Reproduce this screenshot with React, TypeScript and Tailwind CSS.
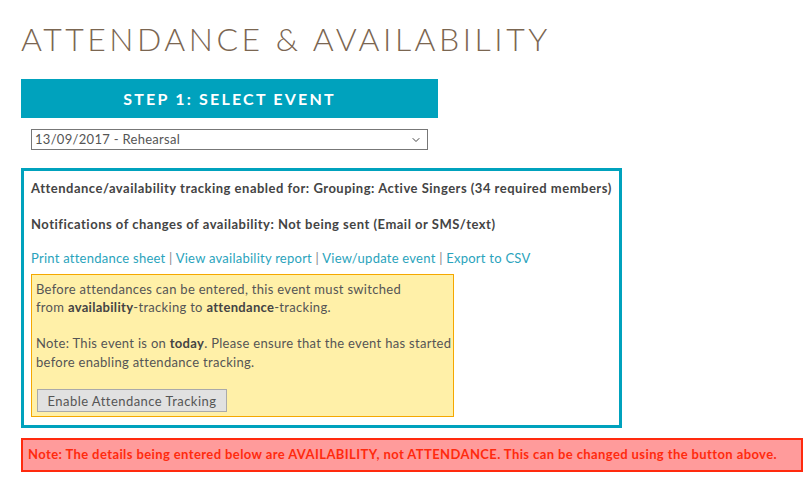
import { ChevronDown } from "lucide-react";

const font = { fontFamily: "Lato, 'Open Sans', sans-serif" };

export default function App() {
  return (
    <div
      className="w-[803px] h-[489px] overflow-hidden bg-white text-[13px] text-[#555] tracking-[0.3px]"
      style={font}
    >
      <h1 className="pl-[21px] pt-[22px] text-[32px] leading-[34px] font-light tracking-[3.5px] text-[#7b6651]">
        ATTENDANCE &amp; AVAILABILITY
      </h1>

      <div className="ml-[21px] mt-[23px] w-[417px] h-[39px] bg-[#00a2bd] flex items-center justify-center">
        <span className="text-white font-bold text-[16px] tracking-[2.2px]">
          STEP 1: SELECT EVENT
        </span>
      </div>

      <div className="relative ml-[31px] mt-[11px] w-[397px]">
        <select className="appearance-none w-full h-[21px] border border-[#777] bg-white pl-[3px] text-[13px] text-[#555] leading-[19px] tracking-[0.3px] outline-none">
          <option>13/09/2017 - Rehearsal</option>
        </select>
        <ChevronDown
          className="absolute right-[6px] top-[5px] w-[12px] h-[12px] text-[#444] pointer-events-none"
          strokeWidth={2}
        />
      </div>

      <div className="ml-[21px] mt-[18px] w-[601px] h-[260px] border-[3px] border-[#00a2bd] px-[7px] pt-[8px]">
        <p className="font-bold text-[#444] leading-[18px] tracking-[0.5px]">
          Attendance/availability tracking enabled for: Grouping: Active Singers (34 required members)
        </p>
        <p className="mt-[18px] font-bold text-[#444] leading-[18px] tracking-[0.5px]">
          Notifications of changes of availability: Not being sent (Email or SMS/text)
        </p>
        <p className="mt-[16px] leading-[18px] text-[#2aa3bc] tracking-[0.25px]">
          <a>Print attendance sheet</a>
          <span className="text-[#888]"> | </span>
          <a>View availability report</a>
          <span className="text-[#888]"> | </span>
          <a>View/update event</a>
          <span className="text-[#888]"> | </span>
          <a>Export to CSV</a>
        </p>

        <div className="mt-[7px] w-[423px] h-[143px] bg-[#fff0a8] border border-[#f5a800] px-[4px] pt-[5px] leading-[18px] whitespace-nowrap">
          <p>
            Before attendances can be entered, this event must switched
            <br />
            from <b className="text-[#444]">availability</b>-tracking to{" "}
            <b className="text-[#444]">attendance</b>-tracking.
          </p>
          <p className="mt-[18px] leading-[19px]">
            Note: This event is on <b className="text-[#444]">today</b>. Please ensure that the event has started
            <br />
            before enabling attendance tracking.
          </p>
          <button className="mt-[17px] ml-[1px] w-[190px] h-[23px] bg-[#e1e1e1] border border-[#aaa] text-[13px] text-[#555] tracking-[0.45px]">
            Enable Attendance Tracking
          </button>
        </div>
      </div>

      <div className="ml-[21px] mt-[10px] h-[34px] border-2 border-[#ff2a0e] bg-[#ff9b9b] flex items-center pl-[5px]">
        <span className="font-bold text-[#ff2a0e] tracking-[0.4px]">
          Note: The details being entered below are AVAILABILITY, not ATTENDANCE. This can be changed using the button above.
        </span>
      </div>
    </div>
  );
}
